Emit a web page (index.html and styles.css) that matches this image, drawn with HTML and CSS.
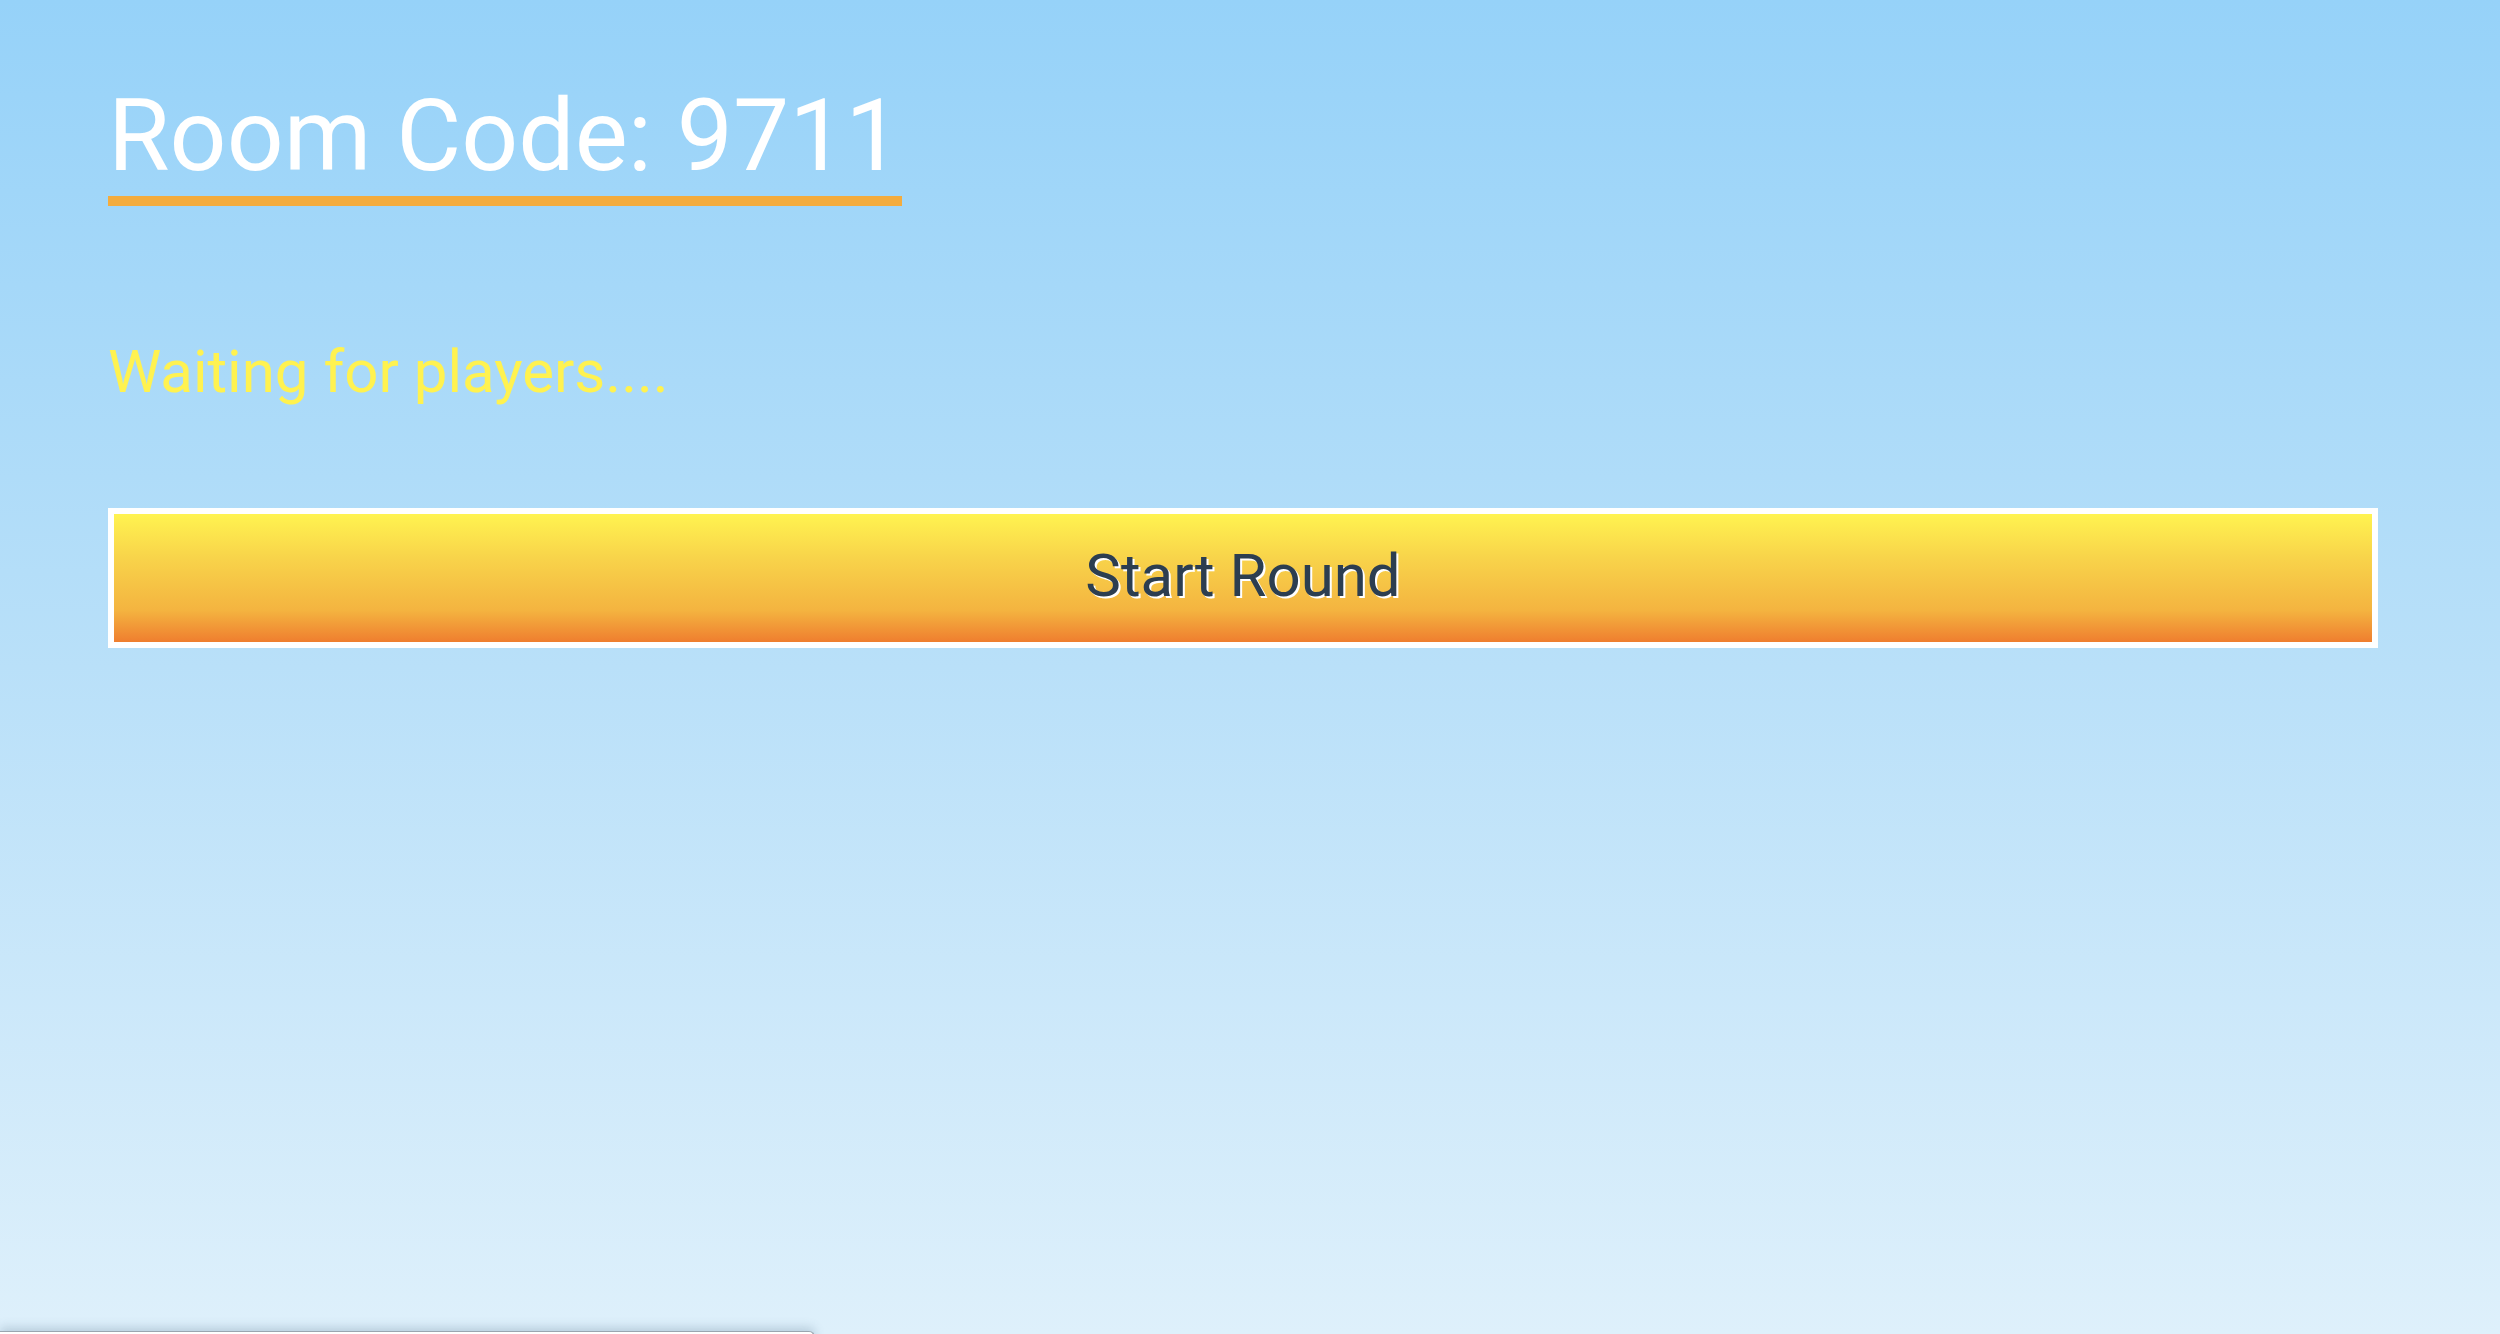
FILE: index.html
```html
<!DOCTYPE html>
<html lang="en">
<head>
<meta charset="utf-8">
<title>Room</title>
<link rel="stylesheet" href="styles.css">
</head>
<body>
<main class="page">
  <h1 class="room-code">Room Code: 9711</h1>
  <p class="status">Waiting for players....</p>
  <button class="start-btn" type="button">Start Round</button>
</main>
<div class="peek"></div>
</body>
</html>
```

FILE: styles.css
```css
html, body {
  margin: 0;
  padding: 0;
  height: 100%;
}
body {
  background: linear-gradient(to bottom, #96d2f9 0%, #b9e0f9 50%, #def0fb 100%);
  font-family: Roboto, "Noto Sans", "Liberation Sans", sans-serif;
  overflow: hidden;
  position: relative;
}
.page {
  display: flex;
  flex-direction: column;
  align-items: flex-start;
  padding: 76px 122px 0 108px;
}
.room-code {
  display: inline-block;
  margin: 0;
  font-size: 100px;
  line-height: 120px;
  font-weight: 400;
  color: #ffffff;
  border-bottom: 10px solid #f4ac3e;
}
.status {
  margin: 130px 0 0 0;
  font-size: 60px;
  line-height: 72px;
  color: #fff250;
}
.start-btn {
  margin-top: 100px;
  align-self: stretch;
  height: 140px;
  border: 6px solid #ffffff;
  border-radius: 0;
  background: linear-gradient(to bottom, #fff350 0%, #f8d34a 35%, #f4b440 75%, #ef7e2f 100%);
  font-family: Roboto, "Noto Sans", "Liberation Sans", sans-serif;
  font-size: 60px;
  color: #2c3e50;
  text-shadow: 2px 2px 0 #ffffff;
  display: flex;
  align-items: center;
  justify-content: center;
  padding: 0 0 6px 0;
  cursor: pointer;
}
.peek {
  position: absolute;
  left: 0;
  top: 1331px;
  width: 814px;
  height: 40px;
  background: #ffffff;
  border-top: 1px solid #9aa6b0;
  border-right: 1px solid #9aa6b0;
  border-top-right-radius: 6px;
  box-shadow: 0 -4px 10px rgba(80, 110, 140, 0.25);
}
```
